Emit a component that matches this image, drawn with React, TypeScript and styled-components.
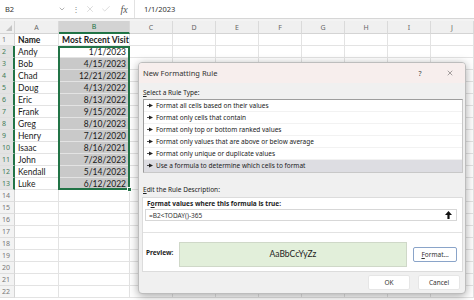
import React from "react";
import styled, { createGlobalStyle } from "styled-components";
import { X, Check, ChevronDown } from "lucide-react";

const GlobalStyle = createGlobalStyle`
  html, body {
    margin: 0;
    padding: 0;
    background: #ffffff;
    overflow: hidden;
  }
  * { box-sizing: border-box; }
`;

const GREEN = "#217346";
const GRID_COLUMNS = "15px 44px 71px repeat(8, 43px)";

const Page = styled.div`
  position: relative;
  display: flex;
  flex-direction: column;
  width: 474px;
  height: 300px;
  overflow: hidden;
  background: #f3f3f3;
  font-family: Lato, "Liberation Sans", sans-serif;
  color: #222;
`;

const FormulaBar = styled.div`
  display: flex;
  align-items: center;
  height: 19px;
  flex-shrink: 0;
  margin-bottom: 2px;
  background: #ffffff;
  border-bottom: 1px solid #d6d6d6;
`;

const NameBox = styled.div`
  display: flex;
  align-items: center;
  justify-content: space-between;
  width: 70px;
  height: 100%;
  padding: 0 4px 0 5px;
  font-family: "Noto Sans", sans-serif;
  font-size: 7.5px;
  color: #333;
`;

const BarDots = styled.div`
  width: 12px;
  text-align: center;
  font-size: 8px;
  color: #888;
`;

const BarIcon = styled.div<{ $w: number }>`
  display: flex;
  align-items: center;
  justify-content: center;
  width: ${p => p.$w}px;
  color: #b9b9b9;
`;

const Fx = styled.div`
  width: 20px;
  text-align: center;
  font-family: "Liberation Serif", serif;
  font-style: italic;
  font-size: 10px;
  color: #555;
`;

const FormulaText = styled.div`
  flex: 1;
  height: 100%;
  display: flex;
  align-items: center;
  padding-left: 9px;
  border-left: 1px solid #e2e2e2;
  font-family: "Noto Sans", sans-serif;
  font-size: 7.5px;
  color: #333;
`;

/* cells grid and the selection layer share one grid area */
const SheetArea = styled.div`
  flex: 1;
  display: grid;
  align-content: start;
  background: #ffffff;
`;

const Sheet = styled.div`
  grid-area: 1 / 1;
  display: grid;
  grid-template-columns: ${GRID_COLUMNS};
  grid-template-rows: 13px;
  grid-auto-rows: 12px;
`;

const SelectionLayer = styled.div`
  grid-area: 1 / 1;
  display: grid;
  grid-template-columns: ${GRID_COLUMNS};
  grid-template-rows: 13px;
  grid-auto-rows: 12px;
  pointer-events: none;
`;

const Corner = styled.div`
  display: flex;
  align-items: flex-end;
  justify-content: flex-end;
  padding: 0 2px 2px 0;
  background: #f0f0f0;
  border-right: 1px solid #d4d4d4;
  border-bottom: 1px solid #d4d4d4;
`;

const ColHead = styled.div<{ $active?: boolean }>`
  display: flex;
  align-items: center;
  justify-content: center;
  font-family: "Noto Sans", sans-serif;
  font-size: 7px;
  color: ${p => (p.$active ? GREEN : "#666")};
  background: ${p => (p.$active ? "#d3d3d3" : "#f0f0f0")};
  border-right: 1px solid #dadada;
  border-bottom: ${p => (p.$active ? `2px solid ${GREEN}` : "1px solid #d4d4d4")};
`;

const RowHead = styled.div<{ $active?: boolean }>`
  display: flex;
  align-items: center;
  padding-left: 2px;
  font-family: "Noto Sans", sans-serif;
  font-size: 7px;
  color: ${p => (p.$active ? "#3f7c57" : "#777")};
  background: ${p => (p.$active ? "#e3e3e3" : "#f3f3f3")};
  border-right: ${p => (p.$active ? `2px solid ${GREEN}` : "1px solid #d4d4d4")};
  border-bottom: 1px solid #dedede;
`;

const Cell = styled.div<{ $right?: boolean; $bold?: boolean; $fill?: boolean }>`
  display: flex;
  align-items: center;
  justify-content: ${p => (p.$right ? "flex-end" : "flex-start")};
  padding: 0 3px;
  white-space: nowrap;
  font-size: 8.5px;
  font-weight: ${p => (p.$bold ? 700 : 400)};
  color: #1a1a1a;
  background: ${p => (p.$fill ? "#c9c9c9" : "#ffffff")};
  border-right: 1px solid #e3e3e3;
  border-bottom: 1px solid #e3e3e3;
`;

const Selection = styled.div`
  grid-column: 3;
  grid-row: 3 / 15;
  position: relative;
  margin-left: -1px;
  border: 2px solid ${GREEN};
`;

const FillHandle = styled.div`
  position: absolute;
  right: -4px;
  bottom: -4px;
  width: 5px;
  height: 5px;
  background: ${GREEN};
  border: 1px solid #fff;
`;

/* dialog */

const Dialog = styled.div`
  position: absolute;
  left: 138px;
  top: 62px;
  width: 328px;
  display: flex;
  flex-direction: column;
  background: #f0f0f0;
  border: 1px solid #bdbdbd;
  border-radius: 4px;
  box-shadow: 0 2px 10px rgba(0, 0, 0, 0.35);
  font-family: "Noto Sans", sans-serif;
  font-size: 6.5px;
  color: #222;
  overflow: hidden;
`;

const TitleBar = styled.div`
  display: flex;
  align-items: center;
  height: 20px;
  padding-left: 4px;
  background: #f7eeed;
  font-size: 7.5px;
  color: #333;
`;

const Title = styled.div`
  flex: 1;
`;

const TitleButton = styled.div`
  display: flex;
  align-items: center;
  justify-content: center;
  width: 30px;
  height: 100%;
  font-size: 7px;
  color: #444;
`;

const Body = styled.div`
  display: flex;
  flex-direction: column;
  padding: 4px 2px 3px 3px;
`;

const Label = styled.div<{ $top?: number }>`
  height: 11px;
  line-height: 11px;
  margin-top: ${p => p.$top ?? 0}px;
  margin-bottom: 1px;
  padding-left: 1px;
`;

const ListBox = styled.div`
  margin-left: 1px;
  background: #ffffff;
  border: 1px solid #9d9d9d;
  border-right-color: #c8c8c8;
  border-bottom-color: #c8c8c8;
`;

const ListItem = styled.div<{ $selected?: boolean }>`
  display: flex;
  align-items: center;
  gap: 3px;
  height: 12px;
  padding-left: 3px;
  background: ${p => (p.$selected ? "#dddde2" : "transparent")};
  border-bottom: 1px solid ${p => (p.$selected ? "transparent" : "#f2f2f2")};
`;

const Panel = styled.div`
  display: flex;
  flex-direction: column;
  height: 75px;
  margin-top: 1px;
  background: #ffffff;
  border: 1px solid #dcdcdc;
`;

const PanelHeading = styled.div`
  height: 10px;
  line-height: 10px;
  margin-top: 1px;
  padding-left: 4px;
  font-weight: 700;
`;

const FormulaField = styled.div`
  display: flex;
  align-items: center;
  justify-content: space-between;
  height: 12px;
  margin: 0 5px 0 2px;
  padding: 0 4px 0 3px;
  border: 1px solid #d7d7d7;
  color: #333;
`;

const Divider = styled.div`
  height: 1px;
  margin-top: 11px;
  background: #e2e2e2;
`;

const PreviewRow = styled.div`
  flex: 1;
  display: flex;
  align-items: center;
  padding: 0 5px 0 3px;
`;

const PreviewLabel = styled.div`
  width: 33px;
  font-weight: 700;
`;

const PreviewBox = styled.div`
  display: flex;
  align-items: center;
  justify-content: center;
  width: 229px;
  height: 25px;
  margin-top: 4px;
  background: #e2efda;
  border: 1px solid #cfd8c8;
  font-family: Lato, "Liberation Sans", sans-serif;
  font-size: 8.5px;
  color: #222;
`;

const Button = styled.div<{ $primary?: boolean }>`
  display: flex;
  align-items: center;
  justify-content: center;
  width: ${p => (p.$primary ? 44 : 42)}px;
  height: 15px;
  background: #ffffff;
  border: 1px solid ${p => (p.$primary ? "#8aa4c9" : "#e6e6e6")};
  border-radius: 2px;
  color: #333;
`;

const FormatButton = styled(Button)`
  margin-left: 6px;
  margin-top: 4px;
`;

const Footer = styled.div`
  display: flex;
  justify-content: flex-end;
  gap: 8px;
  margin-top: 3px;
  padding-right: 3px;
`;

const Key = styled.u`
  text-decoration-thickness: 0.5px;
  text-underline-offset: 1px;
`;

const Bullet = () => (
  <svg width="6" height="5" viewBox="0 0 6 5">
    <path d="M0 2.5H2.5" stroke="#222" strokeWidth="0.8" />
    <polygon points="2,0.6 6,2.5 2,4.4" fill="#222" />
  </svg>
);

const UpArrow = () => (
  <svg width="7" height="8" viewBox="0 0 7 8">
    <polygon points="3.5,0 7,4 4.6,4 4.6,8 2.4,8 2.4,4 0,4" fill="#111" />
  </svg>
);

const SelectAll = () => (
  <svg width="6" height="6" viewBox="0 0 6 6">
    <polygon points="6,0 6,6 0,6" fill="#c4c4c4" />
  </svg>
);

const columns = ["A", "B", "C", "D", "E", "F", "G", "H", "I", "J"];

const data: [string, string][] = [
  ["Name", "Most Recent Visit"],
  ["Andy", "1/1/2023"],
  ["Bob", "4/15/2023"],
  ["Chad", "12/21/2022"],
  ["Doug", "4/13/2022"],
  ["Eric", "8/13/2022"],
  ["Frank", "9/15/2022"],
  ["Greg", "8/10/2023"],
  ["Henry", "7/12/2020"],
  ["Isaac", "8/16/2021"],
  ["John", "7/28/2023"],
  ["Kendall", "5/14/2023"],
  ["Luke", "6/12/2022"]
];

const ruleTypes = [
  "Format all cells based on their values",
  "Format only cells that contain",
  "Format only top or bottom ranked values",
  "Format only values that are above or below average",
  "Format only unique or duplicate values",
  "Use a formula to determine which cells to format"
];

const TOTAL_ROWS = 22;

export default function App() {
  const rows = Array.from({ length: TOTAL_ROWS }, (_, i) => i + 1);

  return (
    <Page>
      <GlobalStyle />
      <FormulaBar>
        <NameBox>
          <span>B2</span>
          <ChevronDown size={8} color="#666" strokeWidth={1.5} />
        </NameBox>
        <BarDots>⋮</BarDots>
        <BarIcon $w={16}>
          <X size={10} strokeWidth={1.2} />
        </BarIcon>
        <BarIcon $w={16}>
          <Check size={10} strokeWidth={1.2} />
        </BarIcon>
        <Fx>fx</Fx>
        <FormulaText>1/1/2023</FormulaText>
      </FormulaBar>

      <SheetArea>
        <Sheet>
          <Corner>
            <SelectAll />
          </Corner>
          {columns.map(c => (
            <ColHead key={c} $active={c === "B"}>
              {c}
            </ColHead>
          ))}
          {rows.map(r => {
            const row = data[r - 1];
            const inRange = r >= 2 && r <= 13;
            return (
              <React.Fragment key={r}>
                <RowHead $active={inRange}>{r}</RowHead>
                {columns.map((c, ci) => {
                  if (ci === 0)
                    return (
                      <Cell key={c} $bold={r === 1}>
                        {row ? row[0] : ""}
                      </Cell>
                    );
                  if (ci === 1)
                    return (
                      <Cell key={c} $bold={r === 1} $right={r > 1} $fill={r >= 3 && r <= 13}>
                        {row ? row[1] : ""}
                      </Cell>
                    );
                  return <Cell key={c} />;
                })}
              </React.Fragment>
            );
          })}
        </Sheet>
        <SelectionLayer>
          <Selection>
            <FillHandle />
          </Selection>
        </SelectionLayer>
      </SheetArea>

      <Dialog>
        <TitleBar>
          <Title>New Formatting Rule</Title>
          <TitleButton>?</TitleButton>
          <TitleButton>
            <X size={8} strokeWidth={1.3} color="#333" />
          </TitleButton>
        </TitleBar>
        <Body>
          <Label>
            <Key>S</Key>elect a Rule Type:
          </Label>
          <ListBox>
            {ruleTypes.map((t, i) => (
              <ListItem key={t} $selected={i === ruleTypes.length - 1}>
                <Bullet />
                <span>{t}</span>
              </ListItem>
            ))}
          </ListBox>
          <Label $top={11}>
            <Key>E</Key>dit the Rule Description:
          </Label>
          <Panel>
            <PanelHeading>
              F<Key>o</Key>rmat values where this formula is true:
            </PanelHeading>
            <FormulaField>
              <span>=B2&lt;TODAY()-365</span>
              <UpArrow />
            </FormulaField>
            <Divider />
            <PreviewRow>
              <PreviewLabel>Preview:</PreviewLabel>
              <PreviewBox>AaBbCcYyZz</PreviewBox>
              <FormatButton $primary>
                <span>
                  <Key>F</Key>ormat...
                </span>
              </FormatButton>
            </PreviewRow>
          </Panel>
          <Footer>
            <Button>OK</Button>
            <Button>Cancel</Button>
          </Footer>
        </Body>
      </Dialog>
    </Page>
  );
}
